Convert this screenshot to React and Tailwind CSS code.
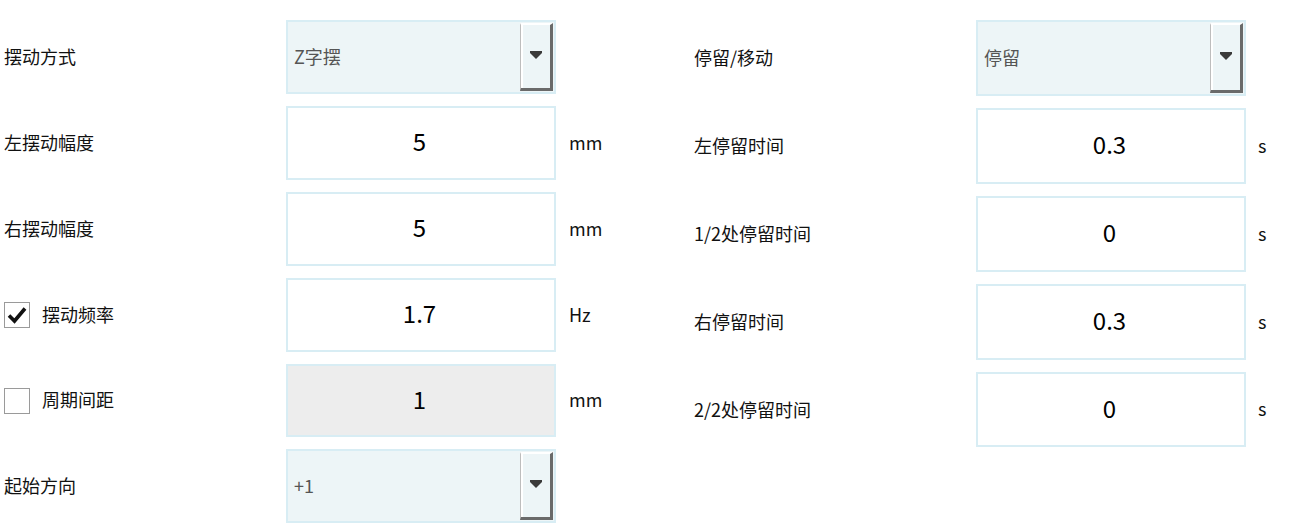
import React from "react";

const FONT = { fontFamily: '"Noto Sans CJK SC", "Noto Sans", sans-serif' };

function Arrow() {
  return (
    <svg width="14" height="9" viewBox="0 0 14 9">
      <rect x="1" y="0" width="12" height="2" fill="#3a3a3a" />
      <polygon points="1,2 13,2 7,8" fill="#3a3a3a" />
    </svg>
  );
}

function Select({ value, h }) {
  return (
    <div
      className={`w-[270px] ${h} border-2 border-[#d8edf4] bg-[#edf5f7] flex items-stretch justify-between`}
    >
      <div className="flex items-center pl-[6px] pb-[2px] text-[18px] text-[#555]">{value}</div>
      <div className="py-[1px] pr-[1px] flex">
        <div className="w-[33px] border-l-[1px] border-t-[2px] border-l-[#bdbdbd] border-t-white border-r-[3px] border-b-[3px] border-r-[#6a6a6a] border-b-[#6a6a6a] bg-[#edf5f7] flex items-center justify-center">
          <div className="w-full h-full border-l-2 border-white flex items-center justify-center pr-[1px] pb-[2px]">
            <Arrow />
          </div>
        </div>
      </div>
    </div>
  );
}

function Field({ value, h, disabled }) {
  return (
    <div
      className={`w-[270px] ${h} border-2 border-[#d8edf4] ${disabled ? "bg-[#ededed]" : "bg-white"} flex items-center justify-center pb-[4px] pr-[3px] text-[24px] text-black`}
    >
      {value}
    </div>
  );
}

function Check({ checked }) {
  return (
    <div className="w-[26px] h-[26px] border-[1.5px] border-[#9a9a9a] bg-white flex items-center justify-center">
      {checked && (
        <svg width="20" height="18" viewBox="0 0 20 18">
          <path d="M2 9.5 L7.5 15 L18 2.5" stroke="#111" strokeWidth="3.6" fill="none" strokeLinejoin="miter" strokeLinecap="butt" />
        </svg>
      )}
    </div>
  );
}

function LeftRow({ label, check, children, unit }) {
  return (
    <div className="flex items-center">
      <div className="w-[286px] pl-[4px] flex items-center text-[18px] text-[#111]">
        {check !== undefined ? (
          <>
            <Check checked={check} />
            <span className="ml-[12px] pb-[2px]">{label}</span>
          </>
        ) : (
          <span className="pb-[2px]">{label}</span>
        )}
      </div>
      {children}
      {unit && <div className="ml-[13px] pb-[2px] text-[18px] text-[#111]">{unit}</div>}
    </div>
  );
}

function RightRow({ label, children, unit }) {
  return (
    <div className="flex items-center">
      <div className="w-[282px] pb-[1px] text-[18px] text-[#111]">{label}</div>
      {children}
      {unit && <div className="ml-[12px] pb-[2px] text-[18px] text-[#111]">{unit}</div>}
    </div>
  );
}

export default function App() {
  return (
    <div className="w-[1294px] h-[530px] bg-white flex pt-[20px]" style={FONT}>
      <div className="w-[694px] flex flex-col gap-[12px]">
        <LeftRow label="摆动方式">
          <Select value="Z字摆" h="h-[74px]" />
        </LeftRow>
        <LeftRow label="左摆动幅度" unit="mm">
          <Field value="5" h="h-[74px]" />
        </LeftRow>
        <LeftRow label="右摆动幅度" unit="mm">
          <Field value="5" h="h-[74px]" />
        </LeftRow>
        <LeftRow label="摆动频率" check={true} unit="Hz">
          <Field value="1.7" h="h-[74px]" />
        </LeftRow>
        <LeftRow label="周期间距" check={false} unit="mm">
          <Field value="1" h="h-[73px]" disabled />
        </LeftRow>
        <LeftRow label="起始方向">
          <Select value="+1" h="h-[74px]" />
        </LeftRow>
      </div>
      <div className="flex flex-col gap-[12px]">
        <RightRow label="停留/移动">
          <Select value="停留" h="h-[76px]" />
        </RightRow>
        <RightRow label="左停留时间" unit="s">
          <Field value="0.3" h="h-[76px]" />
        </RightRow>
        <RightRow label="1/2处停留时间" unit="s">
          <Field value="0" h="h-[76px]" />
        </RightRow>
        <RightRow label="右停留时间" unit="s">
          <Field value="0.3" h="h-[76px]" />
        </RightRow>
        <RightRow label="2/2处停留时间" unit="s">
          <Field value="0" h="h-[75px]" />
        </RightRow>
      </div>
    </div>
  );
}
